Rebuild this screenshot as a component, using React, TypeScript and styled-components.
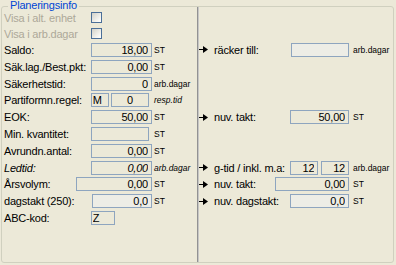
import React from 'react'
import styled, { createGlobalStyle } from 'styled-components'

const GlobalStyle = createGlobalStyle`
  body {
    margin: 0;
    background: #ece9d8;
    font-family: 'Liberation Sans', Arial, sans-serif;
    font-size: 11px;
    color: #000;
  }
`

const Group = styled.div`
  position: relative;
  box-sizing: border-box;
  width: 393px;
  height: 257px;
  margin: 6px 0 0 1px;
  border: 1px solid #d0d0bf;
  border-radius: 3px;
  display: flex;
`

const Legend = styled.span`
  position: absolute;
  top: -8.5px;
  left: 6px;
  padding: 0 2px;
  background: #ece9d8;
  color: #0046d5;
  line-height: 13px;
  letter-spacing: -0.2px;
`

const LeftPane = styled.div`
  box-sizing: border-box;
  width: 196px;
  padding-top: 2.6px;
  border-right: 1px solid #929292;
`

const RightPane = styled.div`
  flex: 1;
  padding-top: 2.6px;
  border-left: 1px solid #c6c6c6;
`

const LeftRow = styled.div<{ $label?: number; $h?: number }>`
  display: grid;
  grid-template-columns: ${(p) => p.$label ?? 86.7}px ${(p) => 148 - (p.$label ?? 86.7)}px auto;
  align-items: center;
  height: ${(p) => p.$h ?? 16.8}px;
  padding-left: 2px;
`

const RightRow = styled.div<{ $label?: number; $h?: number }>`
  display: grid;
  grid-template-columns: 15px ${(p) => p.$label ?? 77}px ${(p) => 135 - (p.$label ?? 77)}px auto;
  align-items: center;
  height: ${(p) => p.$h ?? 16.8}px;
`

const Label = styled.span<{ $muted?: boolean; $italic?: boolean }>`
  white-space: nowrap;
  letter-spacing: -0.2px;
  color: ${(p) => (p.$muted ? '#aca899' : '#000')};
  font-style: ${(p) => (p.$italic ? 'italic' : 'normal')};
`

const Field = styled.div`
  display: flex;
  gap: 2.6px;
  align-items: center;
`

const Box = styled.input<{ $w?: number; $dim?: boolean; $italic?: boolean; $align?: string }>`
  box-sizing: border-box;
  width: ${(p) => (p.$w ? `${p.$w}px` : '100%')};
  flex: ${(p) => (p.$w ? 'none' : '1')};
  min-width: 0;
  height: 14px;
  margin: 0;
  padding: 0 ${(p) => (p.$align === 'left' ? '1px' : '3px')};
  border: 1px solid #8ea5bf;
  border-radius: 0;
  background: ${(p) => (p.$dim ? '#ededE6' : '#ece9d8')};
  font: ${(p) => (p.$italic ? 'italic ' : '')}11px 'Liberation Sans', Arial, sans-serif;
  letter-spacing: -0.2px;
  text-align: ${(p) => p.$align ?? 'right'};
  color: #000;
  outline: none;
`

const Check = styled.span`
  display: block;
  box-sizing: border-box;
  width: 11px;
  height: 11px;
  border: 1px solid #4b6f98;
  background: linear-gradient(135deg, #d2d1c8 0%, #f4f4f0 70%, #ffffff 100%);
`

const Unit = styled.span<{ $gap?: number; $italic?: boolean }>`
  margin-left: ${(p) => p.$gap ?? 2}px;
  font-size: 8.5px;
  white-space: nowrap;
  font-style: ${(p) => (p.$italic ? 'italic' : 'normal')};
`

const Arrow = () => (
  <svg width="10" height="9" viewBox="0 0 10 9">
    <path d="M0 4.5H5" stroke="#000" strokeWidth="1" />
    <path d="M4 1L9 4.5L4 8Z" fill="#000" />
  </svg>
)

export default function App() {
  return (
    <>
      <GlobalStyle />
      <Group>
        <Legend>Planeringsinfo</Legend>
        <LeftPane>
          <LeftRow $h={16}>
            <Label $muted>Visa i alt. enhet</Label>
            <Field>
              <Check />
            </Field>
          </LeftRow>
          <LeftRow $h={16}>
            <Label $muted>Visa i arb.dagar</Label>
            <Field>
              <Check />
            </Field>
          </LeftRow>
          <LeftRow>
            <Label>Saldo:</Label>
            <Box readOnly value="18,00" />
            <Unit>ST</Unit>
          </LeftRow>
          <LeftRow>
            <Label>Säk.lag./Best.pkt:</Label>
            <Box readOnly value="0,00" />
            <Unit>ST</Unit>
          </LeftRow>
          <LeftRow>
            <Label>Säkerhetstid:</Label>
            <Box readOnly value="0" />
            <Unit>arb.dagar</Unit>
          </LeftRow>
          <LeftRow>
            <Label>Partiformn.regel:</Label>
            <Field>
              <Box readOnly value="M" $w={18} $align="left" />
              <Box readOnly value="0" $w={37.6} $align="center" />
            </Field>
            <Unit $italic>resp.tid</Unit>
          </LeftRow>
          <LeftRow>
            <Label>EOK:</Label>
            <Box readOnly value="50,00" />
            <Unit>ST</Unit>
          </LeftRow>
          <LeftRow>
            <Label>Min. kvantitet:</Label>
            <Field>
              <Box readOnly value="" $w={58.6} />
            </Field>
            <Unit>ST</Unit>
          </LeftRow>
          <LeftRow>
            <Label>Avrundn.antal:</Label>
            <Box readOnly value="0,00" />
            <Unit>ST</Unit>
          </LeftRow>
          <LeftRow>
            <Label $italic>Ledtid:</Label>
            <Box readOnly value="0,00" $italic />
            <Unit $italic>arb.dagar</Unit>
          </LeftRow>
          <LeftRow $label={72}>
            <Label>Årsvolym:</Label>
            <Box readOnly value="0,00" />
            <Unit>ST</Unit>
          </LeftRow>
          <LeftRow $label={88.3}>
            <Label>dagstakt (250):</Label>
            <Box readOnly value="0,0" $dim />
            <Unit>ST</Unit>
          </LeftRow>
          <LeftRow>
            <Label>ABC-kod:</Label>
            <Field>
              <Box readOnly value="Z" $w={24.3} $align="left" />
            </Field>
          </LeftRow>
        </LeftPane>

        <RightPane>
          <RightRow $h={32} />
          <RightRow>
            <Arrow />
            <Label>räcker till:</Label>
            <Box readOnly value="" $dim />
            <Unit $gap={4}>arb.dagar</Unit>
          </RightRow>
          <RightRow />
          <RightRow />
          <RightRow />
          <RightRow $label={76.3}>
            <Arrow />
            <Label>nuv. takt:</Label>
            <Box readOnly value="50,00" />
            <Unit $gap={4}>ST</Unit>
          </RightRow>
          <RightRow />
          <RightRow />
          <RightRow $label={76.3}>
            <Arrow />
            <Label>g-tid / inkl. m.a:</Label>
            <Field>
              <Box readOnly value="12" />
              <Box readOnly value="12" />
            </Field>
            <Unit $gap={4}>arb.dagar</Unit>
          </RightRow>
          <RightRow $label={61.3}>
            <Arrow />
            <Label>nuv. takt:</Label>
            <Box readOnly value="0,00" />
            <Unit $gap={4}>ST</Unit>
          </RightRow>
          <RightRow $label={76.3}>
            <Arrow />
            <Label>nuv. dagstakt:</Label>
            <Box readOnly value="0,0" $dim />
            <Unit $gap={4}>ST</Unit>
          </RightRow>
        </RightPane>
      </Group>
    </>
  )
}
